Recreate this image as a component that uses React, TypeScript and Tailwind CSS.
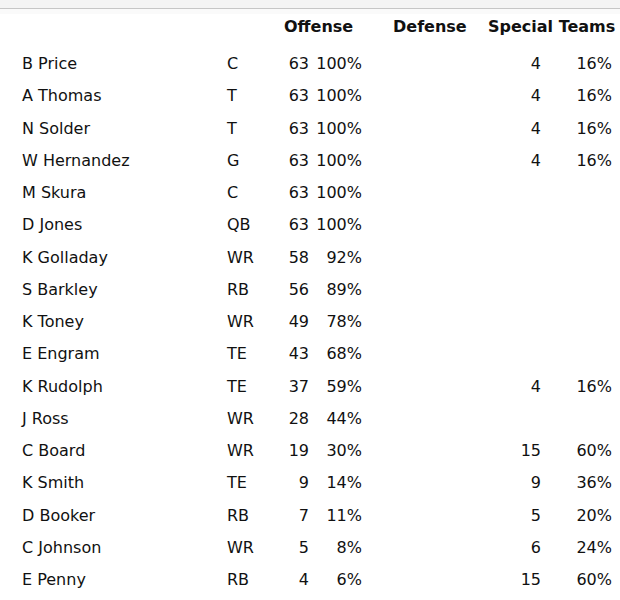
import React from "react";

type Row = { name: string; pos: string; off: string; offPct: string; st?: string; stPct?: string };

const rows: Row[] = [
  { name: "B Price", pos: "C", off: "63", offPct: "100%", st: "4", stPct: "16%" },
  { name: "A Thomas", pos: "T", off: "63", offPct: "100%", st: "4", stPct: "16%" },
  { name: "N Solder", pos: "T", off: "63", offPct: "100%", st: "4", stPct: "16%" },
  { name: "W Hernandez", pos: "G", off: "63", offPct: "100%", st: "4", stPct: "16%" },
  { name: "M Skura", pos: "C", off: "63", offPct: "100%" },
  { name: "D Jones", pos: "QB", off: "63", offPct: "100%" },
  { name: "K Golladay", pos: "WR", off: "58", offPct: "92%" },
  { name: "S Barkley", pos: "RB", off: "56", offPct: "89%" },
  { name: "K Toney", pos: "WR", off: "49", offPct: "78%" },
  { name: "E Engram", pos: "TE", off: "43", offPct: "68%" },
  { name: "K Rudolph", pos: "TE", off: "37", offPct: "59%", st: "4", stPct: "16%" },
  { name: "J Ross", pos: "WR", off: "28", offPct: "44%" },
  { name: "C Board", pos: "WR", off: "19", offPct: "30%", st: "15", stPct: "60%" },
  { name: "K Smith", pos: "TE", off: "9", offPct: "14%", st: "9", stPct: "36%" },
  { name: "D Booker", pos: "RB", off: "7", offPct: "11%", st: "5", stPct: "20%" },
  { name: "C Johnson", pos: "WR", off: "5", offPct: "8%", st: "6", stPct: "24%" },
  { name: "E Penny", pos: "RB", off: "4", offPct: "6%", st: "15", stPct: "60%" },
];

export default function App() {
  return (
    <div
      className="w-[620px] h-[600px] bg-white text-[#111111] overflow-hidden"
      style={{ fontFamily: '"DejaVu Sans", Verdana, sans-serif' }}
    >
      <div className="h-[8px] bg-[#f4f4f4] border-b border-[#c6c6c6] box-content" />
      <div className="h-[5px] bg-[#fafafa]" />
      <div className="flex h-[34px] pt-[3px] text-[16px] leading-[20px] font-bold whitespace-nowrap">
        <div className="w-[284px] shrink-0" />
        <div className="w-[109px] shrink-0">Offense</div>
        <div className="w-[95px] shrink-0">Defense</div>
        <div className="shrink-0">Special Teams</div>
      </div>
      <div className="flex flex-col">
        {rows.map((r) => (
          <div key={r.name} className="flex items-center h-[32.25px] text-[16px] leading-[20px] whitespace-nowrap">
            <div className="w-[227px] pl-[22px] shrink-0">{r.name}</div>
            <div className="w-[45px] shrink-0">{r.pos}</div>
            <div className="w-[37px] text-right shrink-0">{r.off}</div>
            <div className="w-[53px] text-right shrink-0">{r.offPct}</div>
            <div className="w-[179px] text-right shrink-0">{r.st ?? ""}</div>
            <div className="w-[71px] text-right shrink-0">{r.stPct ?? ""}</div>
          </div>
        ))}
      </div>
    </div>
  );
}
